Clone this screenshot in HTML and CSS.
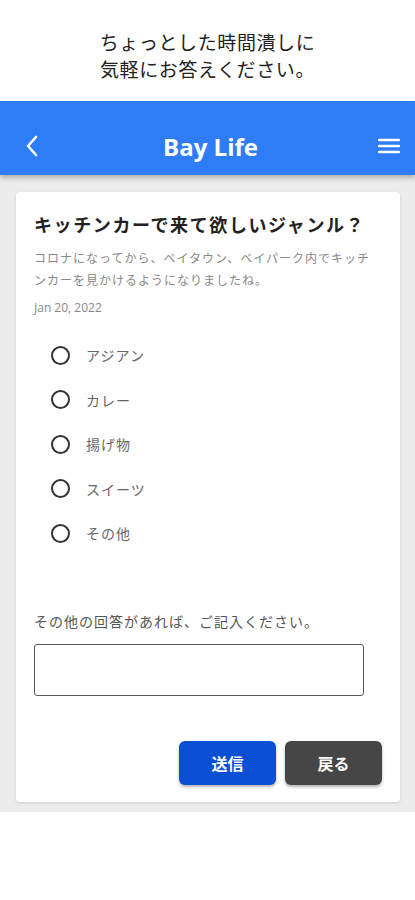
FILE: index.html
```html
<!DOCTYPE html>
<html lang="ja">
<head>
  <meta charset="UTF-8" />
  <meta name="viewport" content="width=device-width, initial-scale=1" />
  <title>Bay Life - アンケート</title>
  <link rel="stylesheet" href="styles.css">
</head>
<body>
  <p class="caption">ちょっとした時間潰しに<br>気軽にお答えください。</p>

  <header class="appbar">
    <button class="icon-btn" aria-label="戻る">
      <svg width="14" height="24" viewBox="0 0 14 24"><path d="M11 3 L3 12 L11 21" fill="none" stroke="#fff" stroke-width="2.6" stroke-linecap="round" stroke-linejoin="round"/></svg>
    </button>
    <h1>Bay Life</h1>
    <button class="icon-btn" aria-label="メニュー">
      <svg width="22" height="18" viewBox="0 0 22 18"><path d="M1 3 H21 M1 9 H21 M1 15 H21" stroke="#fff" stroke-width="2.4" stroke-linecap="round"/></svg>
    </button>
  </header>

  <main class="content">
    <div class="card">
      <h2 class="q-title">キッチンカーで来て欲しいジャンル？</h2>
      <p class="q-desc">コロナになってから、ベイタウン、ベイパーク内でキッチンカーを見かけるようになりましたね。</p>
      <p class="q-date">Jan 20, 2022</p>

      <ul class="options">
        <li><label><input type="radio" name="genre" /><span>アジアン</span></label></li>
        <li><label><input type="radio" name="genre" /><span>カレー</span></label></li>
        <li><label><input type="radio" name="genre" /><span>揚げ物</span></label></li>
        <li><label><input type="radio" name="genre" /><span>スイーツ</span></label></li>
        <li><label><input type="radio" name="genre" /><span>その他</span></label></li>
      </ul>

      <p class="other-label">その他の回答があれば、ご記入ください。</p>
      <textarea class="other-input"></textarea>

      <div class="actions">
        <button class="btn btn-send">送信</button>
        <button class="btn btn-back">戻る</button>
      </div>
    </div>
  </main>
</body>
</html>
```

FILE: styles.css
```css
* {
  box-sizing: border-box;
}
body {
  margin: 0;
  background: #fff;
  color: #222;
  font-family: "Noto Sans", "Noto Sans CJK JP", sans-serif;
}

.caption {
  margin: 0;
  padding: 30px 0 17px;
  text-align: center;
  font-size: 19px;
  line-height: 27px;
  letter-spacing: 0.6px;
  color: #222;
}

.appbar {
  height: 74px;
  background: #2f7df6;
  display: flex;
  align-items: center;
  justify-content: space-between;
  padding: 15px 14px 0 20px;
  box-shadow: 0 3px 5px rgba(0, 0, 0, 0.25);
  position: relative;
}

.appbar h1 {
  margin: 0;
  color: #fff;
  font-family: "Open Sans", sans-serif;
  font-size: 24px;
  font-weight: 700;
  padding-top: 2px;
}

.icon-btn {
  background: none;
  border: none;
  padding: 0;
  width: 24px;
  height: 24px;
  display: flex;
  align-items: center;
  justify-content: center;
}

.content {
  background: #ececec;
  padding: 17px 15px 10px 16px;
}

.card {
  background: #fff;
  border-radius: 4px;
  box-shadow: 0 1px 3px rgba(0, 0, 0, 0.12);
  padding: 19px 18px 17px 18px;
}

.q-title {
  margin: 0;
  font-size: 18px;
  font-weight: 700;
  line-height: 28px;
  letter-spacing: 1.6px;
  color: #222;
}

.q-desc {
  margin: 9px 0 0;
  font-size: 12px;
  line-height: 22px;
  letter-spacing: 1px;
  color: #888;
}

.q-date {
  margin: 7px 0 0;
  font-family: "Open Sans", sans-serif;
  font-size: 12px;
  line-height: 18px;
  color: #888;
}

.options {
  list-style: none;
  margin: 29px 0 0;
  padding: 0 0 0 17px;
}

.options li {
  height: 44.5px;
}

.options label {
  display: flex;
  align-items: center;
  gap: 16px;
  height: 18px;
  font-size: 14px;
  letter-spacing: 1px;
  color: #666;
}

.options input {
  appearance: none;
  margin: 0;
  width: 19px;
  height: 19px;
  border: 2px solid #333;
  border-radius: 50%;
}

.other-label {
  margin: 42px 0 0;
  font-size: 14px;
  line-height: 22px;
  letter-spacing: 1px;
  color: #555;
}

.other-input {
  display: block;
  margin: 11px 0 0;
  width: 330px;
  height: 52px;
  border: 1px solid #555;
  border-radius: 3px;
  resize: none;
}

.actions {
  display: flex;
  justify-content: flex-end;
  gap: 9px;
  margin-top: 45px;
}

.btn {
  width: 97px;
  height: 44px;
  border: none;
  border-radius: 6px;
  color: #fff;
  font-family: "Noto Sans CJK JP", sans-serif;
  font-size: 16px;
  font-weight: 700;
  box-shadow: 0 2px 3px rgba(0, 0, 0, 0.3);
}

.btn-send {
  background: #0a4fd4;
}

.btn-back {
  background: #464646;
}
```
